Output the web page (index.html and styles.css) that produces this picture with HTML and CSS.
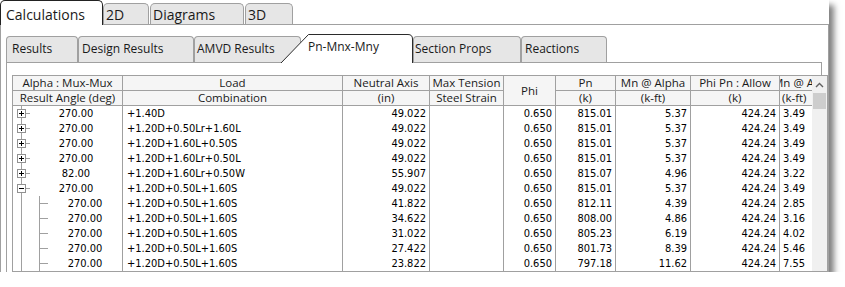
FILE: index.html
```html
<!DOCTYPE html>
<html lang="en">
<head>
    <meta charset="UTF-8">
    <title>Calculations</title>
    <link rel="stylesheet" href="styles.css">
</head>
<body>
    <div class="window">
        <div class="main-tabs">
            <div class="main-tab active tab-calc">Calculations</div>
            <div class="main-tab tab-2d">2D</div>
            <div class="main-tab tab-diagrams">Diagrams</div>
            <div class="main-tab tab-3d">3D</div>
        </div>
        <div class="main-panel">
            <div class="sub-tabs">
                <div class="sub-tab tab-results">Results</div>
                <div class="sub-tab tab-design">Design Results</div>
                <div class="sub-tab tab-amvd">AMVD Results</div>
                <div class="sub-tab current">
                    <svg class="tab-shape" width="132" height="29" viewBox="0 0 132 29">
                        <path d="M0 29 L27.5 0.5 H127 Q131.5 0.5 131.5 5 V29" fill="#fff" stroke="#2b2b2b"/>
                    </svg>
                    <span class="tab-label">Pn-Mnx-Mny</span>
                </div>
                <div class="sub-tab tab-props">Section Props</div>
                <div class="sub-tab tab-reactions">Reactions</div>
            </div>
            <div class="sub-panel">
                <div class="grid">
                    <div class="results">
                        <!-- header -->
                        <div class="hcell">Alpha : Mux-Mux</div>
                        <div class="hcell">Load</div>
                        <div class="hcell">Neutral Axis</div>
                        <div class="hcell">Max Tension</div>
                        <div class="hcell phi">Phi</div>
                        <div class="hcell">Pn</div>
                        <div class="hcell">Mn @ Alpha</div>
                        <div class="hcell">Phi Pn : Allow</div>
                        <div class="hcell clipped">Mn @ Alpha</div>
                        <div class="hcell">Result Angle (deg)</div>
                        <div class="hcell">Combination</div>
                        <div class="hcell">(in)</div>
                        <div class="hcell">Steel Strain</div>
                        <div class="hcell">(k)</div>
                        <div class="hcell">(k-ft)</div>
                        <div class="hcell">(k)</div>
                        <div class="hcell last">(k-ft)</div>

                        <!-- rows -->
                        <div class="cell node"><svg class="expander" width="9" height="9" viewBox="0 0 9 9"><rect x="0.5" y="0.5" width="8" height="8" fill="#fff" stroke="#919191"/><path d="M2 4.5H7M4.5 2V7" stroke="#000"/></svg><span class="stub"></span><span class="angle">270.00</span></div>
                        <div class="cell left">+1.40D</div>
                        <div class="cell num">49.022</div>
                        <div class="cell"></div>
                        <div class="cell num">0.650</div>
                        <div class="cell num">815.01</div>
                        <div class="cell num">5.37</div>
                        <div class="cell num">424.24</div>
                        <div class="cell left end">3.49</div>

                        <div class="cell node"><svg class="expander" width="9" height="9" viewBox="0 0 9 9"><rect x="0.5" y="0.5" width="8" height="8" fill="#fff" stroke="#919191"/><path d="M2 4.5H7M4.5 2V7" stroke="#000"/></svg><span class="stub"></span><span class="angle">270.00</span></div>
                        <div class="cell left">+1.20D+0.50Lr+1.60L</div>
                        <div class="cell num">49.022</div>
                        <div class="cell"></div>
                        <div class="cell num">0.650</div>
                        <div class="cell num">815.01</div>
                        <div class="cell num">5.37</div>
                        <div class="cell num">424.24</div>
                        <div class="cell left end">3.49</div>

                        <div class="cell node"><svg class="expander" width="9" height="9" viewBox="0 0 9 9"><rect x="0.5" y="0.5" width="8" height="8" fill="#fff" stroke="#919191"/><path d="M2 4.5H7M4.5 2V7" stroke="#000"/></svg><span class="stub"></span><span class="angle">270.00</span></div>
                        <div class="cell left">+1.20D+1.60L+0.50S</div>
                        <div class="cell num">49.022</div>
                        <div class="cell"></div>
                        <div class="cell num">0.650</div>
                        <div class="cell num">815.01</div>
                        <div class="cell num">5.37</div>
                        <div class="cell num">424.24</div>
                        <div class="cell left end">3.49</div>

                        <div class="cell node"><svg class="expander" width="9" height="9" viewBox="0 0 9 9"><rect x="0.5" y="0.5" width="8" height="8" fill="#fff" stroke="#919191"/><path d="M2 4.5H7M4.5 2V7" stroke="#000"/></svg><span class="stub"></span><span class="angle">270.00</span></div>
                        <div class="cell left">+1.20D+1.60Lr+0.50L</div>
                        <div class="cell num">49.022</div>
                        <div class="cell"></div>
                        <div class="cell num">0.650</div>
                        <div class="cell num">815.01</div>
                        <div class="cell num">5.37</div>
                        <div class="cell num">424.24</div>
                        <div class="cell left end">3.49</div>

                        <div class="cell node"><svg class="expander" width="9" height="9" viewBox="0 0 9 9"><rect x="0.5" y="0.5" width="8" height="8" fill="#fff" stroke="#919191"/><path d="M2 4.5H7M4.5 2V7" stroke="#000"/></svg><span class="stub"></span><span class="angle">82.00</span></div>
                        <div class="cell left">+1.20D+1.60Lr+0.50W</div>
                        <div class="cell num">55.907</div>
                        <div class="cell"></div>
                        <div class="cell num">0.650</div>
                        <div class="cell num">815.07</div>
                        <div class="cell num">4.96</div>
                        <div class="cell num">424.24</div>
                        <div class="cell left end">3.22</div>

                        <div class="cell node"><svg class="expander" width="9" height="9" viewBox="0 0 9 9"><rect x="0.5" y="0.5" width="8" height="8" fill="#fff" stroke="#919191"/><path d="M2 4.5H7" stroke="#000"/></svg><span class="stub"></span><span class="angle">270.00</span></div>
                        <div class="cell left">+1.20D+0.50L+1.60S</div>
                        <div class="cell num">49.022</div>
                        <div class="cell"></div>
                        <div class="cell num">0.650</div>
                        <div class="cell num">815.01</div>
                        <div class="cell num">5.37</div>
                        <div class="cell num">424.24</div>
                        <div class="cell left end">3.49</div>

                        <div class="cell child"><span class="angle">270.00</span></div>
                        <div class="cell left">+1.20D+0.50L+1.60S</div>
                        <div class="cell num">41.822</div>
                        <div class="cell"></div>
                        <div class="cell num">0.650</div>
                        <div class="cell num">812.11</div>
                        <div class="cell num">4.39</div>
                        <div class="cell num">424.24</div>
                        <div class="cell left end">2.85</div>

                        <div class="cell child"><span class="angle">270.00</span></div>
                        <div class="cell left">+1.20D+0.50L+1.60S</div>
                        <div class="cell num">34.622</div>
                        <div class="cell"></div>
                        <div class="cell num">0.650</div>
                        <div class="cell num">808.00</div>
                        <div class="cell num">4.86</div>
                        <div class="cell num">424.24</div>
                        <div class="cell left end">3.16</div>

                        <div class="cell child"><span class="angle">270.00</span></div>
                        <div class="cell left">+1.20D+0.50L+1.60S</div>
                        <div class="cell num">31.022</div>
                        <div class="cell"></div>
                        <div class="cell num">0.650</div>
                        <div class="cell num">805.23</div>
                        <div class="cell num">6.19</div>
                        <div class="cell num">424.24</div>
                        <div class="cell left end">4.02</div>

                        <div class="cell child"><span class="angle">270.00</span></div>
                        <div class="cell left">+1.20D+0.50L+1.60S</div>
                        <div class="cell num">27.422</div>
                        <div class="cell"></div>
                        <div class="cell num">0.650</div>
                        <div class="cell num">801.73</div>
                        <div class="cell num">8.39</div>
                        <div class="cell num">424.24</div>
                        <div class="cell left end">5.46</div>

                        <div class="cell child"><span class="angle">270.00</span></div>
                        <div class="cell left">+1.20D+0.50L+1.60S</div>
                        <div class="cell num">23.822</div>
                        <div class="cell"></div>
                        <div class="cell num">0.650</div>
                        <div class="cell num">797.18</div>
                        <div class="cell num">11.62</div>
                        <div class="cell num">424.24</div>
                        <div class="cell left end">7.55</div>
                    </div>
                    <div class="scrollbar">
                        <div class="scroll-up">
                            <svg width="9" height="6" viewBox="0 0 9 6"><path d="M1 5L4.5 1.5L8 5" fill="none" stroke="#606060" stroke-width="1.4"/></svg>
                        </div>
                        <div class="scroll-thumb"></div>
                    </div>
                </div>
            </div>
        </div>
    </div>
</body>
</html>
```

FILE: styles.css
```css
body {
    margin: 0;
    background-color: #fff;
    font-family: "Open Sans", sans-serif;
    color: #1a1a1a;
}

.window {
    width: 829px;
    height: 272px;
    overflow: hidden;
    display: flex;
    flex-direction: column;
    background-color: #fff;
    box-shadow: 5px 5px 6px rgba(0, 0, 0, 0.5);
}

/* top level tabs */
.main-tabs {
    display: flex;
    align-items: flex-end;
    height: 24px;
    flex: none;
}

.main-tab {
    box-sizing: border-box;
    height: 21px;
    padding: 1px 0 0 2px;
    font-size: 14px;
    line-height: 19px;
    background-color: #e6e6e6;
    border: 1px solid #a0a0a0;
    border-bottom: none;
    border-radius: 5px 5px 0 0;
    white-space: nowrap;
}

.main-tab.active {
    height: 25px;
    margin-bottom: -1px;
    padding: 4px 0 0 5px;
    background-color: #fff;
    border-color: #222;
    position: relative;
    z-index: 1;
}

.tab-calc { width: 103px; }
.tab-2d { width: 46px; }
.tab-diagrams { width: 94px; margin-left: 1px; }
.tab-3d { width: 48px; margin-left: 1px; }

.main-panel {
    flex: 1;
    border-top: 1px solid #a0a0a0;
    border-left: 1px solid #a0a0a0;
    border-right: 1px solid #a0a0a0;
    padding: 9px 0 0 5px;
}

/* second level tabs */
.sub-tabs {
    display: flex;
    align-items: flex-end;
    height: 28px;
}

.sub-tab {
    box-sizing: border-box;
    height: 26px;
    padding: 4px 0 0 4px;
    font-size: 12px;
    line-height: 16px;
    background-color: #e6e6e6;
    border: 1px solid #a0a0a0;
    border-bottom: none;
    border-radius: 4px 4px 0 0;
    white-space: nowrap;
}

.tab-results { width: 72px; padding-left: 5px; }
.tab-design { width: 116px; padding-left: 3px; }
.tab-amvd { width: 107px; padding-left: 2px; }
.tab-props { width: 108px; padding-left: 1px; }
.tab-reactions { width: 86px; padding-left: 3px; }

.sub-tab.current {
    width: 132px;
    height: 29px;
    margin-left: -20px;
    margin-bottom: -1px;
    padding: 5px 0 0 27px;
    background: none;
    border: none;
    position: relative;
    z-index: 1;
}

.tab-shape {
    position: absolute;
    left: 0;
    top: 0;
}

.tab-label {
    position: relative;
}

.sub-panel {
    width: 816px;
    box-sizing: border-box;
    height: 300px;
    border: 1px solid #a0a0a0;
    padding: 12px 0 0 5px;
}

/* results grid */
.grid {
    display: flex;
    width: 816px;
    box-sizing: border-box;
    border: 1px solid #a0a0a0;
    background-color: #fff;
}

.results {
    display: grid;
    grid-template-columns: 110px 220px 87px 74px 52px 60px 75px 89px 32px;
    grid-auto-rows: 15px;
}

.hcell {
    box-sizing: border-box;
    border-right: 1px solid #a0a0a0;
    border-bottom: 1px solid #a0a0a0;
    background-color: #f5f5f5;
    font-size: 11.5px;
    line-height: 14px;
    text-align: center;
    white-space: nowrap;
    overflow: hidden;
}

.hcell.phi {
    grid-row: span 2;
    display: flex;
    align-items: center;
    justify-content: center;
}

.hcell.clipped {
    border-right: none;
    text-align: left;
    text-indent: -7px;
}

.hcell.last {
    border-right: none;
    text-align: left;
    padding-left: 2px;
}

.cell {
    box-sizing: border-box;
    border-right: 1px solid #a0a0a0;
    font-family: "DejaVu Sans Condensed", "DejaVu Sans", sans-serif;
    font-stretch: condensed;
    font-size: 11px;
    line-height: 15px;
    color: #000;
    white-space: nowrap;
    overflow: hidden;
}

.cell.num {
    text-align: right;
    padding-right: 3px;
}

.cell.left {
    padding-left: 4px;
}

.cell.end {
    border-right: none;
    padding-left: 3px;
}

/* tree column */
.node {
    display: flex;
    align-items: center;
    padding-left: 4px;
    background: linear-gradient(#a0a0a0, #a0a0a0) 8px 0 / 1px 100% no-repeat;
}

.expander {
    flex: none;
}

.stub {
    width: 4px;
    height: 1px;
    background-color: #a0a0a0;
    flex: none;
}

.angle {
    flex: 1;
    text-align: center;
}

.child {
    display: flex;
    padding-left: 35px;
    background:
        linear-gradient(#a0a0a0, #a0a0a0) 8px 0 / 1px 100% no-repeat,
        linear-gradient(#a0a0a0, #a0a0a0) 26px 0 / 1px 100% no-repeat,
        linear-gradient(#a0a0a0, #a0a0a0) 26px 7px / 9px 1px no-repeat;
}

/* scrollbar */
.scrollbar {
    width: 15px;
    flex: none;
    background-color: #f0f0f0;
}

.scroll-up {
    height: 17px;
    display: flex;
    align-items: center;
    justify-content: center;
}

.scroll-thumb {
    height: 16px;
    margin: 0 1px;
    background-color: #cdcdcd;
}
```
